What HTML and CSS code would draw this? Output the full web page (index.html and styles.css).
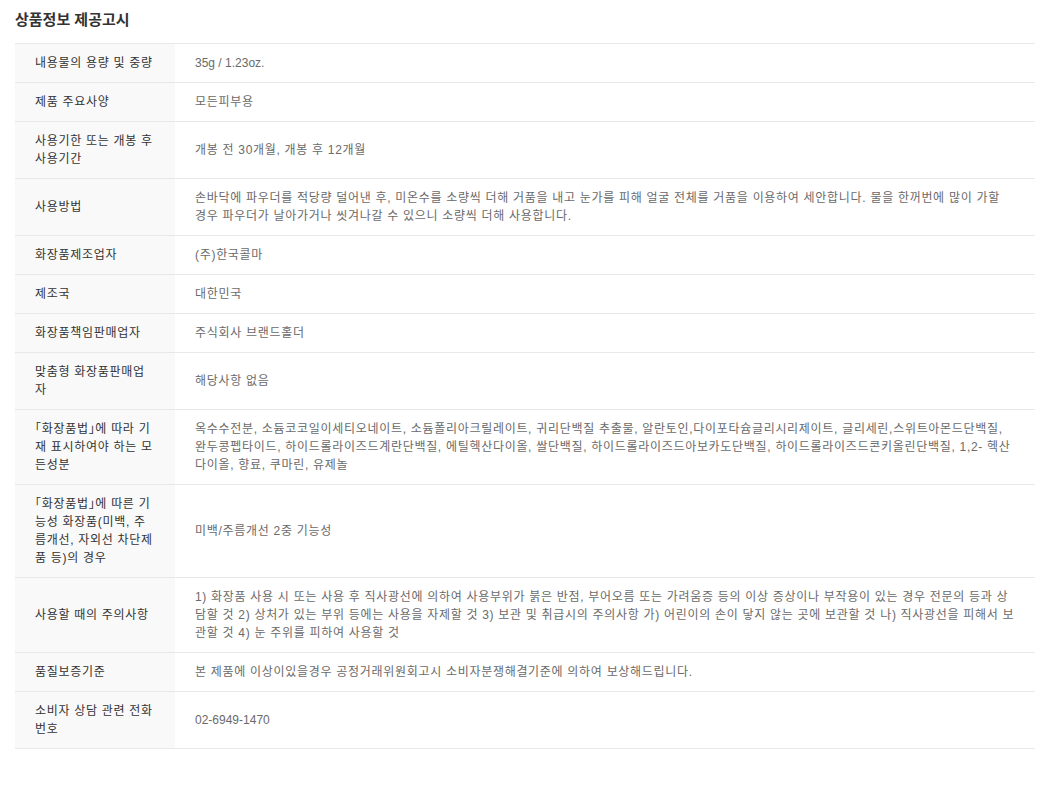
FILE: index.html
```html
<!DOCTYPE html>
<html lang="ko">
<head>
  <meta charset="UTF-8">
  <title>상품정보 제공고시</title>
  <link rel="stylesheet" href="styles.css">
</head>
<body>
  <div class="notice">
    <h3 class="notice-title">상품정보 제공고시</h3>

    <table class="notice-table">
      <tbody>
        <tr>
          <th>내용물의 용량 및 중량</th>
          <td class="latin">35g / 1.23oz.</td>
        </tr>
        <tr>
          <th>제품 주요사양</th>
          <td>모든피부용</td>
        </tr>
        <tr>
          <th>사용기한 또는 개봉 후 사용기간</th>
          <td>개봉 전 30개월, 개봉 후 12개월</td>
        </tr>
        <tr>
          <th>사용방법</th>
          <td>손바닥에 파우더를 적당량 덜어낸 후, 미온수를 소량씩 더해 거품을 내고 눈가를 피해 얼굴 전체를 거품을 이용하여 세안합니다. 물을 한꺼번에 많이 가할 경우 파우더가 날아가거나 씻겨나갈 수 있으니 소량씩 더해 사용합니다.</td>
        </tr>
        <tr>
          <th>화장품제조업자</th>
          <td>(주)한국콜마</td>
        </tr>
        <tr>
          <th>제조국</th>
          <td>대한민국</td>
        </tr>
        <tr>
          <th>화장품책임판매업자</th>
          <td>주식회사 브랜드홀더</td>
        </tr>
        <tr>
          <th>맞춤형 화장품판매업자</th>
          <td>해당사항 없음</td>
        </tr>
        <tr>
          <th>「화장품법」에 따라 기재 표시하여야 하는 모든성분</th>
          <td>옥수수전분, 소듐코코일이세티오네이트, 소듐폴리아크릴레이트, 귀리단백질 추출물, 알란토인,다이포타슘글리시리제이트, 글리세린,스위트아몬드단백질, 완두콩펩타이드, 하이드롤라이즈드계란단백질, 에틸헥산다이올, 쌀단백질, 하이드롤라이즈드아보카도단백질, 하이드롤라이즈드콘키올린단백질, 1,2- 헥산다이올, 향료, 쿠마린, 유제놀</td>
        </tr>
        <tr>
          <th>「화장품법」에 따른 기능성 화장품(미백, 주름개선, 자외선 차단제품 등)의 경우</th>
          <td>미백/주름개선 2중 기능성</td>
        </tr>
        <tr>
          <th>사용할 때의 주의사항</th>
          <td>1) 화장품 사용 시 또는 사용 후 직사광선에 의하여 사용부위가 붉은 반점, 부어오름 또는 가려움증 등의 이상 증상이나 부작용이 있는 경우 전문의 등과 상담할 것 2) 상처가 있는 부위 등에는 사용을 자제할 것 3) 보관 및 취급시의 주의사항 가) 어린이의 손이 닿지 않는 곳에 보관할 것 나) 직사광선을 피해서 보관할 것 4) 눈 주위를 피하여 사용할 것</td>
        </tr>
        <tr>
          <th>품질보증기준</th>
          <td>본 제품에 이상이있을경우 공정거래위원회고시 소비자분쟁해결기준에 의하여 보상해드립니다.</td>
        </tr>
        <tr>
          <th>소비자 상담 관련 전화번호</th>
          <td class="latin">02-6949-1470</td>
        </tr>
      </tbody>
    </table>
  </div>
</body>
</html>
```

FILE: styles.css
```css
body {
  margin: 0;
  font-family: "Liberation Sans", "Noto Sans CJK KR", sans-serif;
  background: #fff;
  color: #333;
}

.notice {
  padding: 10px 21px 40px 15px;
}

.notice-title {
  margin: 0 0 14px;
  font-size: 15px;
  line-height: 19px;
  font-weight: bold;
  color: #333;
}

.notice-table {
  width: 100%;
  border-collapse: collapse;
  border-top: 1px solid #e8e8e8;
  font-size: 12px;
  line-height: 18px;
  letter-spacing: 0.7px;
  font-feature-settings: "halt";
}

.notice-table th,
.notice-table td {
  padding: 10px 20px;
  border-bottom: 1px solid #e8e8e8;
  text-align: left;
  vertical-align: middle;
  font-weight: normal;
}

.notice-table th {
  width: 120px;
  background-color: #f9f9f9;
  color: #333;
}

.notice-table td {
  color: #6a6a6a;
}

.notice-table td.latin {
  letter-spacing: 0;
}
```
